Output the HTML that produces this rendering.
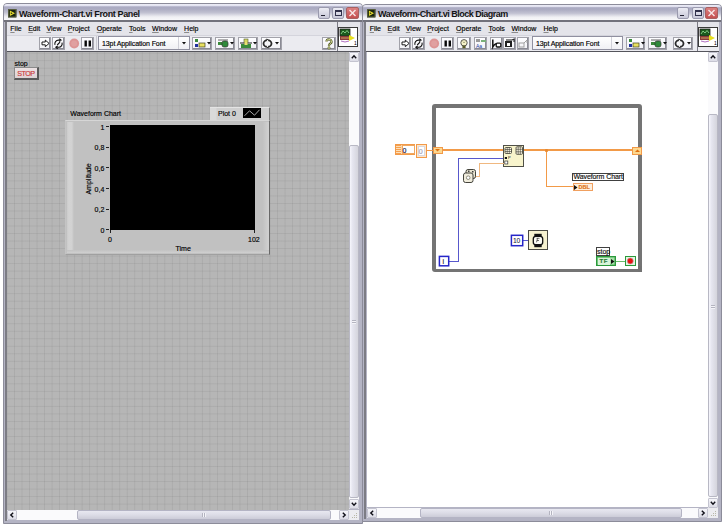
<!DOCTYPE html>
<html><head><meta charset="utf-8">
<style>
*{margin:0;padding:0;box-sizing:border-box}
html,body{width:726px;height:529px;overflow:hidden;background:#fff;position:relative;font-family:"Liberation Sans",sans-serif}
.a{position:absolute}
.frame{background:#b4b4c4;border:1px solid #8c8c9a;border-radius:4px 4px 0 0}
.title{background:linear-gradient(#ececf6 0%,#e4e4f2 9%,#aaaac2 17%,#acacc2 30%,#c2c2d2 52%,#dadae4 64%,#f0f0f4 76%,#fafafc 100%)}
.ttxt{font-weight:bold;font-size:9px;line-height:9px;color:#141414;white-space:nowrap}
.menu{background:#e4e4ea}
.mtxt{font-size:7px;line-height:7px;color:#000;white-space:nowrap;-webkit-text-stroke:0.15px #000}
.tool{background:#ebebf0}
.btn{background:linear-gradient(#fdfdff,#f2f2f6);border:1px solid #a2a2aa;box-shadow:inset -1px -1px 0 #8a8a94}
.grid{background-color:#b6b6b6;background-image:linear-gradient(90deg,rgba(110,110,110,.15) 1px,transparent 1px),linear-gradient(rgba(110,110,110,.15) 1px,transparent 1px);background-size:7.52px 7.52px;background-position:-0.5px 0.7px}
.sb{background:#fafafc}
.thumbv{background:linear-gradient(90deg,#f6f6fc 0,#e6e6f0 30%,#d4d4dc 100%);border:1px solid #b8b8c4;border-radius:2px}
.thumbh{background:linear-gradient(#e8e8f0,#dcdce6 50%,#ccccd8);border:1px solid #b4b4c4;border-radius:2px}
.arr{background:linear-gradient(#f6f6fa,#dcdce6);border:1px solid #c4c4d0;border-radius:1px}
.lbl{font-size:7px;line-height:7px;color:#000;white-space:nowrap;-webkit-text-stroke:0.15px currentColor}
.tbtn{border:1px solid #9a9aae;border-radius:2px;background:linear-gradient(#ececf4,#c8c8d8)}
.close{border:1px solid #a86060;border-radius:2px;background:linear-gradient(#dc8080,#c45050)}
.dd{background:#fcfcfe;border:1px solid #8a8a96}
svg{position:absolute;overflow:visible}
</style></head><body>
<div class="a frame" style="left:3px;top:3px;width:360px;height:521px;"></div>
<div class="a title" style="left:4px;top:4px;width:358px;height:17px;border-radius:3px 3px 0 0"></div>
<div class="a " style="left:4px;top:20px;width:358px;height:2px;background:#72727c"></div>
<div class="a menu" style="left:6px;top:22px;width:354px;height:13px;"></div>
<div class="a tool" style="left:6px;top:35px;width:354px;height:16px;"></div>
<div class="a " style="left:6px;top:34.5px;width:354px;height:1px;background:#d4d4dc"></div>
<div class="a " style="left:6px;top:51px;width:354px;height:1px;background:#55555c"></div>
<div class="a " style="left:5px;top:22px;width:2px;height:499px;background:#7c7c84"></div>
<svg style="left:8.3px;top:8.6px;" width="8.4" height="8.4" viewBox="0 0 9 9"><rect x="0" y="0" width="9" height="9" fill="#1a2410"/><rect x="0.5" y="0.5" width="8" height="8" fill="none" stroke="#5a6040" stroke-width="1"/><path d="M2 1.5 L7.5 4.5 L2 7.5 Z" fill="#e8e030"/><path d="M3 3.5 L5 4.5 L3 5.5Z" fill="#202010"/></svg>
<div class="a ttxt" style="left:19px;top:9.6px;letter-spacing:-0.38px">Waveform-Chart.vi Front Panel</div>
<div class="a tbtn" style="left:317.5px;top:7px;width:12px;height:12px;"></div>
<div class="a " style="left:320.5px;top:14.6px;width:4px;height:1.6px;background:#202030"></div>
<div class="a tbtn" style="left:332px;top:7px;width:12px;height:12px;"></div>
<div class="a " style="left:335px;top:10px;width:7px;height:6px;border:1px solid #30304a;border-top-width:2px"></div>
<div class="a close" style="left:346px;top:7px;width:13px;height:12px;"></div>
<svg style="left:346px;top:7px;" width="13" height="12" viewBox="0 0 13 12"><path d="M3.5 3 L9.5 9 M9.5 3 L3.5 9" stroke="#f8e8e8" stroke-width="1.4"/></svg>
<div class="a " style="left:337px;top:22px;width:1px;height:29px;background:#7a7a84"></div>
<div class="a " style="left:338px;top:27px;width:20px;height:20px;background:#fff;border:1px solid #3a3a3a"></div>
<svg style="left:340px;top:29px;" width="16" height="16" viewBox="0 0 16 16"><rect x="0" y="0" width="10" height="7" fill="#1e5a1e"/><rect x="0" y="0" width="10" height="7" fill="none" stroke="#202020" stroke-width="0.8"/><path d="M1 5 L3 2 L5 4 L7 1.5 L9 4" stroke="#9be09b" stroke-width="0.8" fill="none"/><rect x="0" y="7" width="10" height="4" fill="#8a3a3a"/><path d="M1 9 h8" stroke="#d0a060" stroke-width="1"/><path d="M9 6 L15 9 L9 12Z" fill="#e8e020"/><path d="M1 12 q4 2 8 0" stroke="#b070c0" fill="none" stroke-width="1"/><text x="14" y="16" font-size="5" font-family="Liberation Sans" fill="#000">1</text></svg>
<div class="a mtxt" style="left:10.3px;top:25px;"><u style="text-decoration-thickness:0.5px;text-underline-offset:1px;text-decoration-color:#8a8a8a">F</u>ile</div>
<div class="a mtxt" style="left:28.2px;top:25px;"><u style="text-decoration-thickness:0.5px;text-underline-offset:1px;text-decoration-color:#8a8a8a">E</u>dit</div>
<div class="a mtxt" style="left:46.400000000000006px;top:25px;"><u style="text-decoration-thickness:0.5px;text-underline-offset:1px;text-decoration-color:#8a8a8a">V</u>iew</div>
<div class="a mtxt" style="left:67.8px;top:25px;"><u style="text-decoration-thickness:0.5px;text-underline-offset:1px;text-decoration-color:#8a8a8a">P</u>roject</div>
<div class="a mtxt" style="left:96.7px;top:25px;"><u style="text-decoration-thickness:0.5px;text-underline-offset:1px;text-decoration-color:#8a8a8a">O</u>perate</div>
<div class="a mtxt" style="left:129.1px;top:25px;"><u style="text-decoration-thickness:0.5px;text-underline-offset:1px;text-decoration-color:#8a8a8a">T</u>ools</div>
<div class="a mtxt" style="left:152.10000000000002px;top:25px;"><u style="text-decoration-thickness:0.5px;text-underline-offset:1px;text-decoration-color:#8a8a8a">W</u>indow</div>
<div class="a mtxt" style="left:184.10000000000002px;top:25px;"><u style="text-decoration-thickness:0.5px;text-underline-offset:1px;text-decoration-color:#8a8a8a">H</u>elp</div>
<div class="a btn" style="left:39px;top:37px;width:12px;height:13px;"></div>
<svg style="left:39px;top:37px;" width="12" height="13" viewBox="0 0 12 13"><path d="M3 5 h3.3 v-1.9 l3.8 3.3 l-3.8 3.3 v-1.9 h-3.3z" fill="#fff" stroke="#101010" stroke-width="0.95" stroke-linejoin="round"/></svg>
<div class="a btn" style="left:52px;top:37px;width:13px;height:13px;"></div>
<svg style="left:52px;top:37px;" width="13" height="13" viewBox="0 0 13 13"><g fill="none" stroke="#101010" stroke-width="1.1" stroke-linejoin="round"><path d="M3 7.8 A3.6 3.6 0 0 1 6.5 3.1 L8 3.1"/><path d="M7.3 1.7 L9.2 3.1 L7.3 4.5"/><path d="M10 5.6 A3.6 3.6 0 0 1 6.5 10.3 L5 10.3"/><path d="M5.7 8.9 L3.8 10.3 L5.7 11.7"/><path d="M5.2 8 L8 5.2"/></g></svg>
<svg style="left:69px;top:37px;" width="11" height="13" viewBox="0 0 11 13"><circle cx="5.2" cy="6.5" r="4.9" fill="#dc9494"/><circle cx="5.2" cy="6.5" r="3" fill="#e0a0a0"/></svg>
<div class="a btn" style="left:81px;top:37px;width:13px;height:13px;"></div>
<svg style="left:81px;top:37px;" width="13" height="13" viewBox="0 0 13 13"><rect x="3.5" y="3.5" width="2.4" height="6" fill="#080808"/><rect x="7.6" y="3.5" width="2.4" height="6" fill="#080808"/></svg>
<div class="a " style="left:95.5px;top:36px;width:1px;height:14px;background:#c8c8d0"></div>
<div class="a dd" style="left:98px;top:36px;width:92px;height:14px;background:linear-gradient(#ffffff,#f0f0f4);border-color:#9090a0"></div>
<div class="a mtxt" style="left:102px;top:39.5px;letter-spacing:-0.1px">13pt Application Font</div>
<div class="a " style="left:178px;top:37px;width:1px;height:12px;background:#d0d0d8"></div>
<svg style="left:182px;top:42px;" width="5" height="3" viewBox="0 0 5 3"><path d="M0 0 h4 l-2 2.5z" fill="#101010"/></svg>
<div class="a btn" style="left:192px;top:37px;width:20px;height:13px;"></div>
<svg style="left:192px;top:37px;" width="20" height="13" viewBox="0 0 20 13"><rect x="3" y="2" width="3" height="3" fill="#3a8a3a"/><rect x="3" y="7" width="3" height="3" fill="#2030a0"/><rect x="7" y="6" width="6" height="4" fill="#e8e060" stroke="#404020" stroke-width="0.7"/><path d="M15 5 h4 l-2 2.5z" fill="#101010"/></svg>
<div class="a btn" style="left:215px;top:37px;width:20px;height:13px;"></div>
<svg style="left:215px;top:37px;" width="20" height="13" viewBox="0 0 20 13"><path d="M3 3 h10" stroke="#404040" stroke-width="0.8"/><rect x="3" y="5" width="4" height="3" fill="#3a8a3a"/><rect x="7" y="4" width="6" height="6" rx="2" fill="#2e8a3a" stroke="#303030" stroke-width="0.7"/><path d="M15 5 h4 l-2 2.5z" fill="#101010"/></svg>
<div class="a btn" style="left:238px;top:37px;width:20px;height:13px;"></div>
<svg style="left:238px;top:37px;" width="20" height="13" viewBox="0 0 20 13"><rect x="6" y="2" width="4" height="4" fill="#d8d860" stroke="#506030" stroke-width="0.6"/><path d="M2 6 h12" stroke="#202020" stroke-width="1"/><rect x="3" y="7" width="10" height="4" fill="#3a8a3a"/><rect x="6.5" y="5" width="3" height="3" fill="#e8e070"/><path d="M15 5 h4 l-2 2.5z" fill="#101010"/></svg>
<div class="a btn" style="left:261px;top:37px;width:21px;height:13px;"></div>
<svg style="left:261px;top:37px;" width="21" height="13" viewBox="0 0 21 13"><ellipse cx="6.5" cy="6.5" rx="4" ry="3.4" fill="none" stroke="#2a2a2a" stroke-width="1.8"/><path d="M6.5 2.5 v8" stroke="#f4f4f4" stroke-width="1.2"/><path d="M5.5 1.5 l2 1 l-2 1z M7.5 9.5 l-2 1 l2 1z" fill="#2a2a2a"/><path d="M14 5 h4 l-2 2.5z" fill="#101010"/></svg>
<div class="a btn" style="left:322px;top:37px;width:14px;height:13px;"></div>
<svg style="left:322px;top:37px;" width="14" height="13" viewBox="0 0 14 13"><path d="M4.5 4.5 a2.5 2.3 0 1 1 3.5 2.2 q-1 .6 -1 1.8 v.8" stroke="#4a5020" stroke-width="2.2" fill="none"/><path d="M4.5 4.5 a2.5 2.3 0 1 1 3.5 2.2 q-1 .6 -1 1.8 v.8" stroke="#e4eca0" stroke-width="0.9" fill="none"/><circle cx="7" cy="11" r="1.2" fill="#e4eca0" stroke="#4a5020" stroke-width="0.6"/></svg>
<div class="a grid" style="left:7px;top:52px;width:342px;height:458px"></div>
<div class="a sb" style="left:349px;top:52px;width:10px;height:457px;"></div>
<div class="a arr" style="left:349px;top:52px;width:10px;height:10px;"></div>
<svg style="left:349px;top:52px;" width="10" height="10" viewBox="0 0 10 10"><path d="M2.8 6.2 L5 3.8 L7.2 6.2" stroke="#101018" stroke-width="1.4" fill="none"/></svg>
<div class="a thumbv" style="left:349px;top:145px;width:10px;height:353px;"></div>
<div class="a " style="left:352px;top:320px;width:4px;height:1px;background:#b4b4c0"></div>
<div class="a " style="left:352px;top:321px;width:4px;height:1px;background:#f4f4f8"></div>
<div class="a " style="left:352px;top:322px;width:4px;height:1px;background:#b4b4c0"></div>
<div class="a " style="left:352px;top:323px;width:4px;height:1px;background:#f4f4f8"></div>
<div class="a arr" style="left:349px;top:499px;width:10px;height:10px;"></div>
<svg style="left:349px;top:499px;" width="10" height="10" viewBox="0 0 10 10"><path d="M2.8 3.8 L5 6.2 L7.2 3.8" stroke="#101018" stroke-width="1.4" fill="none"/></svg>
<div class="a sb" style="left:7px;top:510px;width:342px;height:10px;"></div>
<div class="a arr" style="left:7px;top:510px;width:10px;height:10px;"></div>
<svg style="left:7px;top:510px;" width="10" height="10" viewBox="0 0 10 10"><path d="M6.2 2.8 L3.8 5 L6.2 7.2" stroke="#101018" stroke-width="1.4" fill="none"/></svg>
<div class="a thumbh" style="left:77px;top:510px;width:254px;height:10px;"></div>
<div class="a " style="left:202px;top:513px;width:1px;height:4px;background:#b4b4c0"></div>
<div class="a " style="left:203px;top:513px;width:1px;height:4px;background:#f4f4f8"></div>
<div class="a " style="left:204px;top:513px;width:1px;height:4px;background:#b4b4c0"></div>
<div class="a " style="left:205px;top:513px;width:1px;height:4px;background:#f4f4f8"></div>
<div class="a arr" style="left:339px;top:510px;width:10px;height:10px;"></div>
<svg style="left:339px;top:510px;" width="10" height="10" viewBox="0 0 10 10"><path d="M3.8 2.8 L6.2 5 L3.8 7.2" stroke="#101018" stroke-width="1.4" fill="none"/></svg>
<div class="a " style="left:349px;top:510px;width:10px;height:10px;background:#ececf0"></div>
<svg style="left:349px;top:510px;" width="10" height="10" viewBox="0 0 10 10"><g fill="#b8b8a8"><rect x="7" y="3" width="1" height="1"/><rect x="5" y="5" width="1" height="1"/><rect x="7" y="5" width="1" height="1"/><rect x="3" y="7" width="1" height="1"/><rect x="5" y="7" width="1" height="1"/><rect x="7" y="7" width="1" height="1"/></g></svg>
<div class="a lbl" style="left:14.5px;top:59.5px;">stop</div>
<div class="a " style="left:14px;top:67px;width:25px;height:13px;background:linear-gradient(#ece2e4,#ddd2d4);border:1px solid #5a5a5a;border-right-width:2px;border-bottom-width:2px;border-top-color:#8a8a8a;border-left-color:#8a8a8a"></div>
<div class="a lbl" style="left:17.3px;top:70.2px;color:#cc3a3a;font-size:7.2px;letter-spacing:-0.55px">STOP</div>
<div class="a lbl" style="left:70.3px;top:110px;">Waveform Chart</div>
<div class="a " style="left:209.5px;top:107px;width:60.5px;height:12.5px;background:linear-gradient(90deg,#dadada 0,#dadada 10%,#cfcfcf 12%,#cfcfcf);border-right:1.6px solid #7c7c7c;border-top:1px solid #e4e4e4"></div>
<div class="a lbl" style="left:218px;top:109.5px;">Plot 0</div>
<div class="a " style="left:243px;top:108px;width:18px;height:10px;background:#000"></div>
<svg style="left:243px;top:108px;" width="18" height="10" viewBox="0 0 18 10"><path d="M1.5 7.8 L6.5 2.8 L11.5 7.2 L16.5 1.8" stroke="#d0d0d0" stroke-width="0.8" fill="none"/></svg>
<div class="a " style="left:65px;top:120px;width:205px;height:134.5px;background:#c1c1c1;border-left:1.5px solid #c4c4c4;border-top:1.5px solid #d6d6d6;border-right:1.6px solid #686868;border-bottom:1.4px solid #a0a0a0"></div>
<div class="a " style="left:66.5px;top:121.5px;width:7px;height:131.5px;background:linear-gradient(90deg,#cbcbcb 0,#d3d3d3 25%,#d2d2d2 70%,#c1c1c1 100%)"></div>
<div class="a " style="left:263px;top:121.5px;width:5.5px;height:131.5px;background:linear-gradient(90deg,#c2c2c2,#d2d2d2)"></div>
<div class="a " style="left:66.5px;top:250px;width:202px;height:3px;background:linear-gradient(#c2c2c2,#d0d0d0)"></div>
<div class="a " style="left:110px;top:125px;width:145px;height:105px;background:#000"></div>
<div class="a lbl" style="right:621.7px;top:123.5px">1</div>
<div class="a " style="left:106px;top:126px;width:3px;height:1px;background:#202020"></div>
<div class="a lbl" style="right:621.7px;top:144.0px">0,8</div>
<div class="a " style="left:106px;top:147px;width:3px;height:1px;background:#202020"></div>
<div class="a lbl" style="right:621.7px;top:164.8px">0,6</div>
<div class="a " style="left:106px;top:167px;width:3px;height:1px;background:#202020"></div>
<div class="a lbl" style="right:621.7px;top:185.7px">0,4</div>
<div class="a " style="left:106px;top:188px;width:3px;height:1px;background:#202020"></div>
<div class="a lbl" style="right:621.7px;top:206.3px">0,2</div>
<div class="a " style="left:106px;top:209px;width:3px;height:1px;background:#202020"></div>
<div class="a lbl" style="right:621.7px;top:227.0px">0</div>
<div class="a " style="left:106px;top:229px;width:3px;height:1px;background:#202020"></div>
<div class="a lbl" style="left:87.5px;top:178.5px;transform:translate(-50%,-50%) rotate(-90deg)">Amplitude</div>
<div class="a " style="left:110px;top:230px;width:1px;height:3px;background:#202020"></div>
<div class="a " style="left:254px;top:230px;width:1px;height:3px;background:#202020"></div>
<div class="a lbl" style="left:108px;top:236px;">0</div>
<div class="a lbl" style="left:248px;top:236px;">102</div>
<div class="a lbl" style="left:175.5px;top:245px;">Time</div>
<div class="a frame" style="left:362px;top:4px;width:360px;height:518px;"></div>
<div class="a title" style="left:363px;top:5px;width:358px;height:16px;border-radius:3px 3px 0 0"></div>
<div class="a " style="left:363px;top:20px;width:358px;height:2px;background:#72727c"></div>
<div class="a menu" style="left:365px;top:22px;width:354px;height:13px;"></div>
<div class="a tool" style="left:365px;top:35px;width:354px;height:16px;"></div>
<div class="a " style="left:365px;top:34.5px;width:354px;height:1px;background:#d4d4dc"></div>
<div class="a " style="left:365px;top:51px;width:354px;height:1px;background:#55555c"></div>
<div class="a " style="left:364px;top:22px;width:2px;height:497px;background:#7c7c84"></div>
<svg style="left:367.3px;top:8.6px;" width="8.4" height="8.4" viewBox="0 0 9 9"><rect x="0" y="0" width="9" height="9" fill="#1a2410"/><rect x="0.5" y="0.5" width="8" height="8" fill="none" stroke="#5a6040" stroke-width="1"/><path d="M2 1.5 L7.5 4.5 L2 7.5 Z" fill="#e8e030"/><path d="M3 3.5 L5 4.5 L3 5.5Z" fill="#202010"/></svg>
<div class="a ttxt" style="left:378px;top:9.6px;letter-spacing:-0.5px">Waveform-Chart.vi Block Diagram</div>
<div class="a tbtn" style="left:677px;top:7px;width:12px;height:12px;"></div>
<div class="a " style="left:680px;top:14.6px;width:4px;height:1.6px;background:#202030"></div>
<div class="a tbtn" style="left:692px;top:7px;width:12px;height:12px;"></div>
<div class="a " style="left:695px;top:10px;width:7px;height:6px;border:1px solid #30304a;border-top-width:2px"></div>
<div class="a close" style="left:705px;top:7px;width:13px;height:12px;"></div>
<svg style="left:705px;top:7px;" width="13" height="12" viewBox="0 0 13 12"><path d="M3.5 3 L9.5 9 M9.5 3 L3.5 9" stroke="#f8e8e8" stroke-width="1.4"/></svg>
<div class="a " style="left:697px;top:22px;width:1px;height:29px;background:#7a7a84"></div>
<div class="a " style="left:698px;top:27px;width:20px;height:20px;background:#fff;border:1px solid #3a3a3a"></div>
<svg style="left:700px;top:29px;" width="16" height="16" viewBox="0 0 16 16"><rect x="0" y="0" width="10" height="7" fill="#1e5a1e"/><rect x="0" y="0" width="10" height="7" fill="none" stroke="#202020" stroke-width="0.8"/><path d="M1 5 L3 2 L5 4 L7 1.5 L9 4" stroke="#9be09b" stroke-width="0.8" fill="none"/><rect x="0" y="7" width="10" height="4" fill="#8a3a3a"/><path d="M1 9 h8" stroke="#d0a060" stroke-width="1"/><path d="M9 6 L15 9 L9 12Z" fill="#e8e020"/><path d="M1 12 q4 2 8 0" stroke="#b070c0" fill="none" stroke-width="1"/><text x="14" y="16" font-size="5" font-family="Liberation Sans" fill="#000">1</text></svg>
<div class="a mtxt" style="left:369.7px;top:25px;"><u style="text-decoration-thickness:0.5px;text-underline-offset:1px;text-decoration-color:#8a8a8a">F</u>ile</div>
<div class="a mtxt" style="left:387.59999999999997px;top:25px;"><u style="text-decoration-thickness:0.5px;text-underline-offset:1px;text-decoration-color:#8a8a8a">E</u>dit</div>
<div class="a mtxt" style="left:405.8px;top:25px;"><u style="text-decoration-thickness:0.5px;text-underline-offset:1px;text-decoration-color:#8a8a8a">V</u>iew</div>
<div class="a mtxt" style="left:427.2px;top:25px;"><u style="text-decoration-thickness:0.5px;text-underline-offset:1px;text-decoration-color:#8a8a8a">P</u>roject</div>
<div class="a mtxt" style="left:456.1px;top:25px;"><u style="text-decoration-thickness:0.5px;text-underline-offset:1px;text-decoration-color:#8a8a8a">O</u>perate</div>
<div class="a mtxt" style="left:488.5px;top:25px;"><u style="text-decoration-thickness:0.5px;text-underline-offset:1px;text-decoration-color:#8a8a8a">T</u>ools</div>
<div class="a mtxt" style="left:511.5px;top:25px;"><u style="text-decoration-thickness:0.5px;text-underline-offset:1px;text-decoration-color:#8a8a8a">W</u>indow</div>
<div class="a mtxt" style="left:543.5px;top:25px;"><u style="text-decoration-thickness:0.5px;text-underline-offset:1px;text-decoration-color:#8a8a8a">H</u>elp</div>
<div class="a btn" style="left:399px;top:37px;width:12px;height:13px;"></div>
<svg style="left:399px;top:37px;" width="12" height="13" viewBox="0 0 12 13"><path d="M3 5 h3.3 v-1.9 l3.8 3.3 l-3.8 3.3 v-1.9 h-3.3z" fill="#fff" stroke="#101010" stroke-width="0.95" stroke-linejoin="round"/></svg>
<div class="a btn" style="left:412px;top:37px;width:13px;height:13px;"></div>
<svg style="left:412px;top:37px;" width="13" height="13" viewBox="0 0 13 13"><g fill="none" stroke="#101010" stroke-width="1.1" stroke-linejoin="round"><path d="M3 7.8 A3.6 3.6 0 0 1 6.5 3.1 L8 3.1"/><path d="M7.3 1.7 L9.2 3.1 L7.3 4.5"/><path d="M10 5.6 A3.6 3.6 0 0 1 6.5 10.3 L5 10.3"/><path d="M5.7 8.9 L3.8 10.3 L5.7 11.7"/><path d="M5.2 8 L8 5.2"/></g></svg>
<svg style="left:429px;top:37px;" width="11" height="13" viewBox="0 0 11 13"><circle cx="5.2" cy="6.5" r="4.9" fill="#dc9494"/><circle cx="5.2" cy="6.5" r="3" fill="#e0a0a0"/></svg>
<div class="a btn" style="left:441px;top:37px;width:13px;height:13px;"></div>
<svg style="left:441px;top:37px;" width="13" height="13" viewBox="0 0 13 13"><rect x="3.5" y="3.5" width="2.4" height="6" fill="#080808"/><rect x="7.6" y="3.5" width="2.4" height="6" fill="#080808"/></svg>
<div class="a btn" style="left:457px;top:37px;width:14px;height:13px;"></div>
<svg style="left:457px;top:37px;" width="14" height="13" viewBox="0 0 14 13"><circle cx="7" cy="5.8" r="3.2" fill="#f6f2c8" stroke="#303030" stroke-width="0.8"/><path d="M5.8 4.5 l1.2 1.5 l1.2 -1.5" stroke="#606040" stroke-width="0.5" fill="none"/><rect x="5.4" y="8.6" width="3.2" height="2.6" fill="#5a5a28"/></svg>
<div class="a btn" style="left:474px;top:37px;width:13px;height:13px;"></div>
<svg style="left:474px;top:37px;" width="13" height="13" viewBox="0 0 13 13"><rect x="2" y="2" width="4" height="3" fill="#9a9a9a"/><rect x="7" y="3" width="5" height="2" fill="#7ab07a"/><text x="2" y="11" font-size="5" font-family="Liberation Sans" fill="#2040a0">Aa</text></svg>
<div class="a btn" style="left:490px;top:37px;width:13px;height:13px;"></div>
<svg style="left:490px;top:37px;" width="13" height="13" viewBox="0 0 13 13"><path d="M2.8 2.5 v7.5 q2 -3.5 3.5 -3.2" stroke="#101010" stroke-width="1.5" fill="none"/><rect x="6.2" y="6.2" width="4.6" height="3.8" rx="1" fill="#fff" stroke="#101010" stroke-width="1.3"/></svg>
<div class="a btn" style="left:503px;top:37px;width:13px;height:13px;"></div>
<svg style="left:503px;top:37px;" width="13" height="13" viewBox="0 0 13 13"><rect x="2" y="4" width="7" height="6" fill="#202020"/><rect x="4" y="6" width="3" height="3" fill="#fff"/><path d="M3 3 h6 l2 -1 v3" stroke="#101010" stroke-width="1" fill="none"/></svg>
<div class="a btn" style="left:517px;top:37px;width:12px;height:13px;"></div>
<svg style="left:517px;top:37px;" width="12" height="13" viewBox="0 0 12 13"><rect x="2" y="6" width="5" height="4" fill="none" stroke="#a0a0a0" stroke-width="1"/><path d="M7 6 l3 -3 v3" stroke="#a0a0a0" stroke-width="1" fill="none"/></svg>
<div class="a dd" style="left:532px;top:36px;width:91px;height:14px;background:linear-gradient(#ffffff,#f0f0f4);border-color:#9090a0"></div>
<div class="a mtxt" style="left:536px;top:39.5px;letter-spacing:-0.1px">13pt Application Font</div>
<div class="a " style="left:611px;top:37px;width:1px;height:12px;background:#d0d0d8"></div>
<svg style="left:615px;top:42px;" width="5" height="3" viewBox="0 0 5 3"><path d="M0 0 h4 l-2 2.5z" fill="#101010"/></svg>
<div class="a btn" style="left:626px;top:37px;width:19px;height:13px;"></div>
<svg style="left:626px;top:37px;" width="19" height="13" viewBox="0 0 19 13"><rect x="3" y="2" width="3" height="3" fill="#3a8a3a"/><rect x="3" y="7" width="3" height="3" fill="#2030a0"/><rect x="7" y="6" width="6" height="4" fill="#e8e060" stroke="#404020" stroke-width="0.7"/><path d="M15 5 h4 l-2 2.5z" fill="#101010"/></svg>
<div class="a btn" style="left:648px;top:37px;width:19px;height:13px;"></div>
<svg style="left:648px;top:37px;" width="19" height="13" viewBox="0 0 19 13"><path d="M3 3 h10" stroke="#404040" stroke-width="0.8"/><rect x="3" y="5" width="4" height="3" fill="#3a8a3a"/><rect x="7" y="4" width="6" height="6" rx="2" fill="#2e8a3a" stroke="#303030" stroke-width="0.7"/><path d="M15 5 h4 l-2 2.5z" fill="#101010"/></svg>
<div class="a btn" style="left:673px;top:37px;width:20px;height:13px;"></div>
<svg style="left:673px;top:37px;" width="20" height="13" viewBox="0 0 20 13"><ellipse cx="6.5" cy="6.5" rx="4" ry="3.4" fill="none" stroke="#2a2a2a" stroke-width="1.8"/><path d="M6.5 2.5 v8" stroke="#f4f4f4" stroke-width="1.2"/><path d="M5.5 1.5 l2 1 l-2 1z M7.5 9.5 l-2 1 l2 1z" fill="#2a2a2a"/><path d="M14 5 h4 l-2 2.5z" fill="#101010"/></svg>
<div class="a " style="left:367px;top:52px;width:341px;height:455px;background:#fff"></div>
<div class="a sb" style="left:708px;top:52px;width:10px;height:455.5px;"></div>
<div class="a arr" style="left:708px;top:52px;width:10px;height:10px;"></div>
<svg style="left:708px;top:52px;" width="10" height="10" viewBox="0 0 10 10"><path d="M2.8 6.2 L5 3.8 L7.2 6.2" stroke="#101018" stroke-width="1.4" fill="none"/></svg>
<div class="a thumbv" style="left:708px;top:114px;width:10px;height:383px;"></div>
<div class="a " style="left:711px;top:305px;width:4px;height:1px;background:#b4b4c0"></div>
<div class="a " style="left:711px;top:306px;width:4px;height:1px;background:#f4f4f8"></div>
<div class="a " style="left:711px;top:307px;width:4px;height:1px;background:#b4b4c0"></div>
<div class="a " style="left:711px;top:308px;width:4px;height:1px;background:#f4f4f8"></div>
<div class="a arr" style="left:708px;top:497.5px;width:10px;height:10px;"></div>
<svg style="left:708px;top:497.5px;" width="10" height="10" viewBox="0 0 10 10"><path d="M2.8 3.8 L5 6.2 L7.2 3.8" stroke="#101018" stroke-width="1.4" fill="none"/></svg>
<div class="a sb" style="left:367px;top:507.8px;width:341px;height:10px;"></div>
<div class="a arr" style="left:367px;top:507.8px;width:10px;height:10px;"></div>
<svg style="left:367px;top:507.8px;" width="10" height="10" viewBox="0 0 10 10"><path d="M6.2 2.8 L3.8 5 L6.2 7.2" stroke="#101018" stroke-width="1.4" fill="none"/></svg>
<div class="a thumbh" style="left:420px;top:507.8px;width:262px;height:10px;"></div>
<div class="a " style="left:549px;top:510.8px;width:1px;height:4px;background:#b4b4c0"></div>
<div class="a " style="left:550px;top:510.8px;width:1px;height:4px;background:#f4f4f8"></div>
<div class="a " style="left:551px;top:510.8px;width:1px;height:4px;background:#b4b4c0"></div>
<div class="a " style="left:552px;top:510.8px;width:1px;height:4px;background:#f4f4f8"></div>
<div class="a arr" style="left:698px;top:507.8px;width:10px;height:10px;"></div>
<svg style="left:698px;top:507.8px;" width="10" height="10" viewBox="0 0 10 10"><path d="M3.8 2.8 L6.2 5 L3.8 7.2" stroke="#101018" stroke-width="1.4" fill="none"/></svg>
<div class="a " style="left:708px;top:507.8px;width:10px;height:10px;background:#ececf0"></div>
<svg style="left:708px;top:507.8px;" width="10" height="10" viewBox="0 0 10 10"><g fill="#b8b8a8"><rect x="7" y="3" width="1" height="1"/><rect x="5" y="5" width="1" height="1"/><rect x="7" y="5" width="1" height="1"/><rect x="3" y="7" width="1" height="1"/><rect x="5" y="7" width="1" height="1"/><rect x="7" y="7" width="1" height="1"/></g></svg>
<div class="a " style="left:432px;top:104px;width:210px;height:168px;border:4px solid #747474;border-bottom-width:3px;border-radius:3px;background:transparent"></div>
<div class="a " style="left:638px;top:266px;width:4px;height:6px;background:#727272"></div>
<div class="a " style="left:395px;top:143.5px;width:20px;height:11.5px;background:#fbd7a8;border:1px solid #f29a48"></div>
<div class="a " style="left:396px;top:144.5px;width:5px;height:9.5px;background:repeating-linear-gradient(#f6a050 0 1px,#fde0b8 1px 2px)"></div>
<div class="a " style="left:401.5px;top:145px;width:13px;height:9px;background:#fff;border:1px solid #f0a860"></div>
<div class="a lbl" style="left:402.5px;top:146.5px;color:#101040">0</div>
<div class="a " style="left:415.5px;top:144px;width:11.5px;height:13.5px;background:#fde6cc;border:1px solid #f29a48"></div>
<div class="a " style="left:417.5px;top:146px;width:7.5px;height:9.5px;background:#fff;border:1px solid #d8d8e0"></div>
<div class="a lbl" style="left:418.8px;top:147.5px;color:#a0a0b8">0</div>
<div class="a " style="left:427px;top:149.5px;width:6px;height:1.3px;background:#f29a48"></div>
<div class="a " style="left:442px;top:149.3px;width:61px;height:1.8px;background:#f29a48"></div>
<div class="a " style="left:524px;top:149.3px;width:108px;height:1.8px;background:#f29a48"></div>
<div class="a " style="left:545.8px;top:149.5px;width:1.4px;height:37.5px;background:#f29a48"></div>
<div class="a " style="left:545.8px;top:185.7px;width:27px;height:1.4px;background:#f29a48"></div>
<div class="a " style="left:545px;top:149px;width:3px;height:3px;background:#e88a30;border-radius:1px"></div>
<div class="a " style="left:432.5px;top:147px;width:10px;height:7px;background:#fcd890;border:1px solid #f29a48"></div>
<svg style="left:435px;top:149px;" width="5" height="3" viewBox="0 0 5 3"><path d="M0 0 h5 l-2.5 2.6z" fill="#e07010"/></svg>
<div class="a " style="left:632px;top:147px;width:10px;height:7.5px;background:#fcd890;border:1px solid #f29a48"></div>
<svg style="left:634.5px;top:149px;" width="5" height="3" viewBox="0 0 5 3"><path d="M0 3 h5 l-2.5 -2.6z" fill="#e07010"/></svg>
<div class="a " style="left:503px;top:144.5px;width:21px;height:22px;background:#f8f4cc;border:1px solid #505048"></div>
<svg style="left:503px;top:144.5px;" width="21" height="22" viewBox="0 0 21 22"><g stroke="#3a3a30" stroke-width="0.8" fill="#fffbe8"><rect x="2" y="2.5" width="6.5" height="6" rx="1"/><rect x="13" y="1.8" width="6.5" height="7.5" rx="1"/></g><path d="M4.2 2.5 v6 M6.3 2.5 v6 M2 4.5 h6.5 M2 6.5 h6.5 M15.2 1.8 v7.5 M17.3 1.8 v7.5 M13 4.3 h6.5 M13 6.8 h6.5" stroke="#3a3a30" stroke-width="0.6"/><rect x="1.8" y="12" width="2.2" height="2" fill="#101010"/><text x="5" y="13.5" font-size="4" font-family="Liberation Sans" fill="#101010">P</text><rect x="1.8" y="16" width="3" height="3" fill="#fff" stroke="#303030" stroke-width="0.7"/></svg>
<div class="a " style="left:457.8px;top:158px;width:45.5px;height:1.2px;background:#5858cc"></div>
<div class="a " style="left:457.8px;top:158px;width:1.2px;height:104px;background:#5858cc"></div>
<div class="a " style="left:448px;top:261px;width:11px;height:1.2px;background:#5858cc"></div>
<div class="a " style="left:522px;top:239.6px;width:6.5px;height:1.2px;background:#5858cc"></div>
<div class="a " style="left:479px;top:163px;width:24.5px;height:1.1px;background:#f0b880"></div>
<div class="a " style="left:479px;top:163px;width:1.1px;height:13.5px;background:#f0b880"></div>
<div class="a " style="left:475px;top:175.5px;width:5px;height:1.1px;background:#f0b880"></div>
<svg style="left:462.5px;top:169px;" width="13.5" height="14" viewBox="0 0 13.5 14"><rect x="3" y="0.5" width="9.5" height="9" rx="2" fill="#e8e4d0" stroke="#303028" stroke-width="0.9"/><rect x="0.5" y="4" width="9.5" height="9.5" rx="2" fill="#f0ecdc" stroke="#303028" stroke-width="0.9"/><circle cx="5.2" cy="8.7" r="1.8" fill="#fff" stroke="#505040" stroke-width="0.6"/><rect x="5" y="1.5" width="1.5" height="1.5" fill="#404040"/><rect x="9" y="2" width="1.5" height="1.5" fill="#404040"/></svg>
<div class="a " style="left:572.3px;top:172.5px;width:52px;height:8.5px;background:#fff;border:1px solid #404040"></div>
<div class="a lbl" style="left:573.5px;top:173.3px;letter-spacing:-0.1px;color:#101010">Waveform Chart</div>
<div class="a " style="left:572.8px;top:182.5px;width:20px;height:8.5px;background:#fdeedd;border:1px solid #f0a060"></div>
<svg style="left:574px;top:184.5px;" width="4" height="5" viewBox="0 0 4 5"><path d="M0 0 L3.5 2.5 L0 5z" fill="#101010"/></svg>
<div class="a lbl" style="left:578.5px;top:183.5px;color:#e07010;font-size:5.5px;font-weight:bold">DBL</div>
<svg style="left:438px;top:255px;" width="12" height="12" viewBox="0 0 12 12"><rect x="1.4" y="1.4" width="9.3" height="9.4" fill="#fff" stroke="#2626c8" stroke-width="1.5"/></svg>
<div class="a lbl" style="left:442.6px;top:258px;color:#101030">i</div>
<svg style="left:510px;top:234px;" width="14" height="13" viewBox="0 0 14 13"><rect x="1.4" y="1.3" width="11.3" height="10.4" fill="#fff" stroke="#2626c8" stroke-width="1.5"/></svg>
<div class="a lbl" style="left:513px;top:237.3px;color:#202040;font-size:6.8px;letter-spacing:-0.3px;-webkit-text-stroke:0.05px">10</div>
<div class="a " style="left:528px;top:229.8px;width:20.3px;height:20.3px;background:#f6f2d0;border:1px solid #4a4a44"></div>
<svg style="left:528px;top:229.8px;" width="20" height="20" viewBox="0 0 20 20"><rect x="6.3" y="3.8" width="7.4" height="3" fill="#101010"/><rect x="6.3" y="14.2" width="7.4" height="3" fill="#101010"/><rect x="5.3" y="6.3" width="9.4" height="8.4" rx="2.5" fill="#fbfbf4" stroke="#101010" stroke-width="1.3"/><path d="M8.5 8.3 h3 M9.5 8.3 l-1 4 M9 10.5 h2" stroke="#303030" stroke-width="0.7" fill="none"/></svg>
<div class="a " style="left:595.8px;top:247px;width:14.5px;height:8.5px;background:#fff;border:1px solid #404040"></div>
<div class="a lbl" style="left:597px;top:247.8px;color:#101010">stop</div>
<div class="a " style="left:596px;top:256px;width:20px;height:10px;background:#a8e0a8;border:1px solid #2a9a3a;box-shadow:inset 0 0 0 0.6px #50b060"></div>
<div class="a " style="left:598px;top:258px;width:12px;height:6.5px;background:#d8f4d8"></div>
<div class="a lbl" style="left:599.5px;top:258.3px;color:#2a7a34;font-size:6px;font-weight:bold;letter-spacing:0.5px">TF</div>
<svg style="left:611px;top:258.5px;" width="4" height="5" viewBox="0 0 4 5"><path d="M0 0 L3.5 2.5 L0 5z" fill="#101010"/></svg>
<div class="a " style="left:616px;top:260.8px;width:9.5px;height:1px;background:#6aba6a"></div>
<div class="a " style="left:625.2px;top:256px;width:10.5px;height:10px;background:#e4f4e4;border:1px solid #2a9a3a"></div>
<svg style="left:625.2px;top:256px;" width="10.5" height="10" viewBox="0 0 10.5 10"><circle cx="5.25" cy="5" r="3" fill="#e81010" stroke="#c0a0a0" stroke-width="0.6"/></svg>
</body></html>
